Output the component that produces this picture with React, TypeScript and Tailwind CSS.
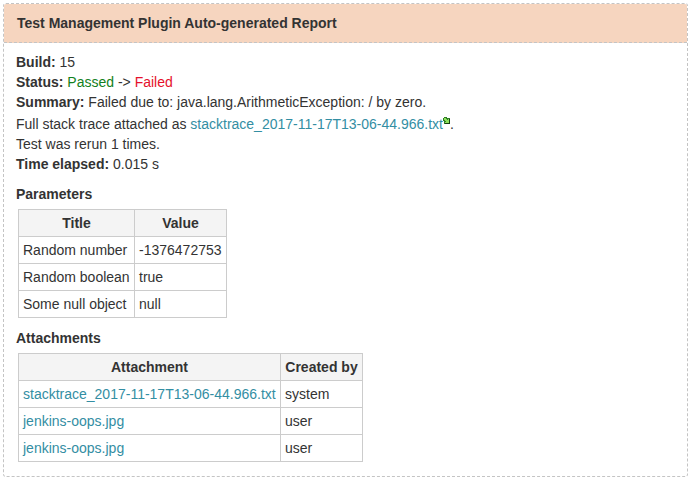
import React from "react";

const th = "h-[27px] border border-[#cccccc] bg-[#f4f4f4] p-0 text-center font-bold";
const td = "h-[27px] border border-[#cccccc] px-1 py-0 whitespace-nowrap";
const link = "text-[#338ea3]";

export default function App() {
  return (
    <div className="h-[480px] w-[690px] bg-white pt-[3px] pl-[3px] font-['Liberation_Sans',Arial,sans-serif] text-[14px] leading-5 text-[#333333]">
      <section className="h-[474px] w-[685px] overflow-hidden rounded-[3px] border border-dashed border-[#c4c4c4]">
        <header className="h-[39px] border-b border-dashed border-[#c4c4c4] bg-[#f6d5bf] px-[13px] pt-[9px] font-bold">
          Test Management Plugin Auto-generated Report
        </header>
        <div className="pt-[9px] pl-3">
          <p><b>Build:</b> 15</p>
          <p><b>Status:</b> <span className="text-[#128020]">Passed</span> -&gt; <span className="text-[#e5112b]">Failed</span></p>
          <p><b>Summary:</b> Failed due to: java.lang.ArithmeticException: / by zero.</p>
          <p className="mt-[2px] flex whitespace-pre">
            <span>Full stack trace attached as </span><a className={link}>stacktrace_2017-11-17T13-06-44.966.txt</a>
            <svg className="mt-[3px]" width="7" height="7" viewBox="0 0 7 7" shapeRendering="crispEdges">
              <path d="M1 0h3v1h3v6H1V4H0V1h1Z" fill="#2f7c26" />
              <path d="M1 1h2v1h1v1h1V2h1v4H2V5h1V4H2V3H1Z" fill="#8be05a" />
              <path d="M6 2h1v5H2V6h4Z" fill="#153f12" />
            </svg>
            <span>.</span>
          </p>
          <p>Test was rerun 1 times.</p>
          <p><b>Time elapsed:</b> 0.015 s</p>
          <h2 className="mt-[10px] font-bold">Parameters</h2>
          <table className="mt-[5px] ml-[2px] w-[209px] table-fixed border-collapse">
            <colgroup><col className="w-[116px]" /><col className="w-[92px]" /></colgroup>
            <thead><tr><th className={th}>Title</th><th className={th}>Value</th></tr></thead>
            <tbody>
              <tr><td className={td}>Random number</td><td className={td}>-1376472753</td></tr>
              <tr><td className={td}>Random boolean</td><td className={td}>true</td></tr>
              <tr><td className={td}>Some null object</td><td className={td}>null</td></tr>
            </tbody>
          </table>
          <h2 className="mt-[10px] font-bold">Attachments</h2>
          <table className="mt-[5px] ml-[2px] w-[345px] table-fixed border-collapse">
            <colgroup><col className="w-[262px]" /><col className="w-[82px]" /></colgroup>
            <thead><tr><th className={th}>Attachment</th><th className={th}>Created by</th></tr></thead>
            <tbody>
              <tr><td className={td}><a className={link}>stacktrace_2017-11-17T13-06-44.966.txt</a></td><td className={td}>system</td></tr>
              <tr><td className={td}><a className={link}>jenkins-oops.jpg</a></td><td className={td}>user</td></tr>
              <tr><td className={td}><a className={link}>jenkins-oops.jpg</a></td><td className={td}>user</td></tr>
            </tbody>
          </table>
        </div>
      </section>
    </div>
  );
}
